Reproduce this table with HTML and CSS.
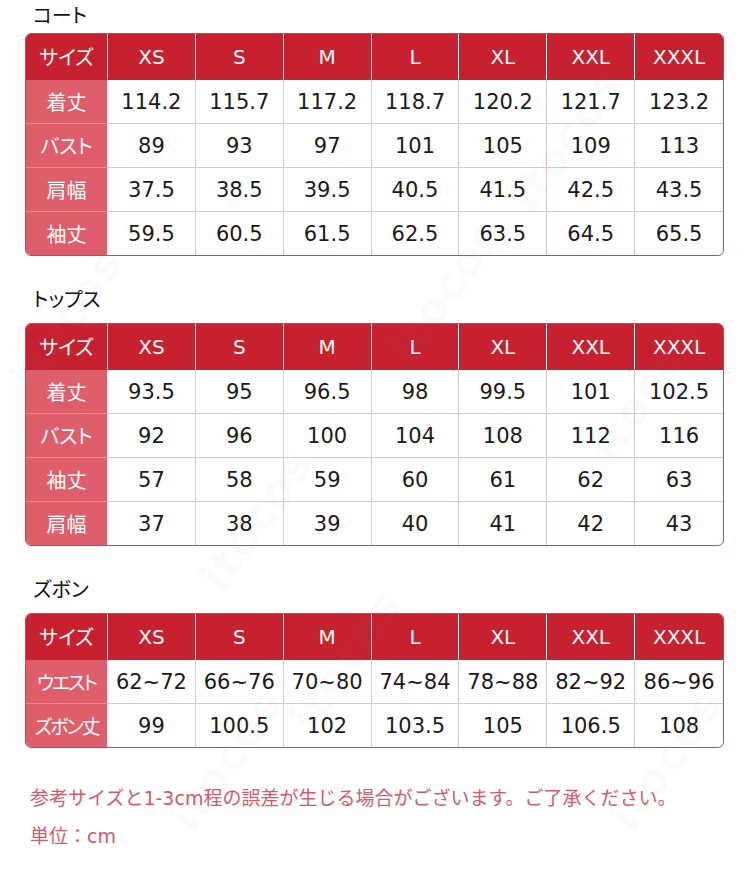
FILE: index.html
```html
<!DOCTYPE html>
<html lang="ja">
<head>
<meta charset="utf-8">
<title>サイズ表</title>
<link rel="stylesheet" href="styles.css">
</head>
<body>
<div class="page">
  <h2 class="title first">コート</h2>
  <div class="chart">
    <div class="hd lb">サイズ</div><div class="hd">XS</div><div class="hd">S</div><div class="hd">M</div><div class="hd">L</div><div class="hd">XL</div><div class="hd">XXL</div><div class="hd">XXXL</div>
    <div class="lb">着丈</div><div>114.2</div><div>115.7</div><div>117.2</div><div>118.7</div><div>120.2</div><div>121.7</div><div>123.2</div>
    <div class="lb">バスト</div><div>89</div><div>93</div><div>97</div><div>101</div><div>105</div><div>109</div><div>113</div>
    <div class="lb">肩幅</div><div>37.5</div><div>38.5</div><div>39.5</div><div>40.5</div><div>41.5</div><div>42.5</div><div>43.5</div>
    <div class="lb last">袖丈</div><div class="last">59.5</div><div class="last">60.5</div><div class="last">61.5</div><div class="last">62.5</div><div class="last">63.5</div><div class="last">64.5</div><div class="last">65.5</div>
  </div>

  <h2 class="title">トップス</h2>
  <div class="chart">
    <div class="hd lb">サイズ</div><div class="hd">XS</div><div class="hd">S</div><div class="hd">M</div><div class="hd">L</div><div class="hd">XL</div><div class="hd">XXL</div><div class="hd">XXXL</div>
    <div class="lb">着丈</div><div>93.5</div><div>95</div><div>96.5</div><div>98</div><div>99.5</div><div>101</div><div>102.5</div>
    <div class="lb">バスト</div><div>92</div><div>96</div><div>100</div><div>104</div><div>108</div><div>112</div><div>116</div>
    <div class="lb">袖丈</div><div>57</div><div>58</div><div>59</div><div>60</div><div>61</div><div>62</div><div>63</div>
    <div class="lb last">肩幅</div><div class="last">37</div><div class="last">38</div><div class="last">39</div><div class="last">40</div><div class="last">41</div><div class="last">42</div><div class="last">43</div>
  </div>

  <h2 class="title">ズボン</h2>
  <div class="chart">
    <div class="hd lb">サイズ</div><div class="hd">XS</div><div class="hd">S</div><div class="hd">M</div><div class="hd">L</div><div class="hd">XL</div><div class="hd">XXL</div><div class="hd">XXXL</div>
    <div class="lb narrow">ウエスト</div><div>62~72</div><div>66~76</div><div>70~80</div><div>74~84</div><div>78~88</div><div>82~92</div><div>86~96</div>
    <div class="lb last narrow">ズボン丈</div><div class="last">99</div><div class="last">100.5</div><div class="last">102</div><div class="last">103.5</div><div class="last">105</div><div class="last">106.5</div><div class="last">108</div>
  </div>

  <p class="note">参考サイズと1-3cm程の誤差が生じる場合がございます。ご了承ください。</p>
  <p class="note">単位：cm</p>

  <span class="wm w1">itocos</span>
  <span class="wm w2">itocos</span>
  <span class="wm w3">itocos</span>
  <span class="wm w4">itocos</span>
  <span class="wm w5">itocos</span>
  <span class="wm w6">itocos</span>
  <span class="wm w7">itocos</span>
  <span class="wm w8">itocos</span>
</div>
</body>
</html>
```

FILE: styles.css
```css
html, body {
  margin: 0;
  padding: 0;
  background: #ffffff;
}

body {
  font-family: "DejaVu Sans", "Noto Sans CJK JP", sans-serif;
  color: #1a1a1a;
  overflow: hidden;
}

.page {
  position: relative;
  width: 750px;
  height: 876px;
  padding: 0 0 0 25px;
  box-sizing: border-box;
  overflow: hidden;
}

.title {
  margin: 31px 0 12px 8px;
  font-family: "Noto Sans CJK JP", sans-serif;
  font-weight: 400;
  font-size: 20px;
  line-height: 24px;
  color: #111;
  font-feature-settings: "palt";
}

.title.first {
  margin-top: 0;
  margin-bottom: 4px;
  line-height: 29px;
}

.chart {
  position: relative;
  z-index: 1;
  width: 699px;
  box-sizing: border-box;
  display: grid;
  grid-template-columns: 82px repeat(7, 1fr);
  border: 1px solid #c0485a;
  border-radius: 6px;
  overflow: hidden;
  background: #fff;
}

.chart > div {
  height: 44px;
  display: flex;
  align-items: center;
  justify-content: center;
  font-size: 21px;
  color: #1a1a1a;
  border-right: 1px solid #dcc6ca;
  border-bottom: 1px solid #dcc6ca;
  box-sizing: border-box;
  white-space: nowrap;
}

.chart > div:nth-child(8n) {
  border-right: none;
}

.chart > .last {
  border-bottom: none;
  height: 43px;
}

.chart > .lb {
  font-size: 20px;
  background: #df5e6b;
  color: #ffffff;
  font-family: "Noto Sans CJK JP", sans-serif;
  font-feature-settings: "palt";
  border-right: 1px solid #ffffff;
  border-bottom: 1px solid #eb8c96;
}

.chart > .lb.last {
  border-bottom: none;
}

.chart > .narrow {
  letter-spacing: -2px;
  font-size: 19px;
}

.chart > .hd {
  height: 46px;
  font-size: 20px;
  background: #c72130;
  color: #ffffff;
  border-right: 1px solid #ffffff;
  border-bottom: 1px solid #c72130;
}

.chart > .hd:nth-child(8n) {
  border-right: none;
}

.note {
  position: relative;
  z-index: 1;
  margin: 0 0 0 5px;
  font-size: 19px;
  line-height: 38px;
  color: #d35a6b;
}

.chart + .note {
  margin-top: 31px;
}

.wm {
  position: absolute;
  z-index: 2;
  pointer-events: none;
  font-family: "DejaVu Sans", sans-serif;
  font-weight: 700;
  font-size: 44px;
  letter-spacing: 2px;
  color: rgba(120, 120, 120, 0.045);
  transform: rotate(-55deg);
  transform-origin: left center;
}

.w1 { left: 20px; top: 360px; }
.w2 { left: 210px; top: 560px; }
.w3 { left: 400px; top: 330px; }
.w4 { left: 600px; top: 430px; }
.w5 { left: 180px; top: 800px; }
.w6 { left: 620px; top: 800px; }
.w7 { left: 300px; top: 700px; }
.w8 { left: 520px; top: 180px; }
```
